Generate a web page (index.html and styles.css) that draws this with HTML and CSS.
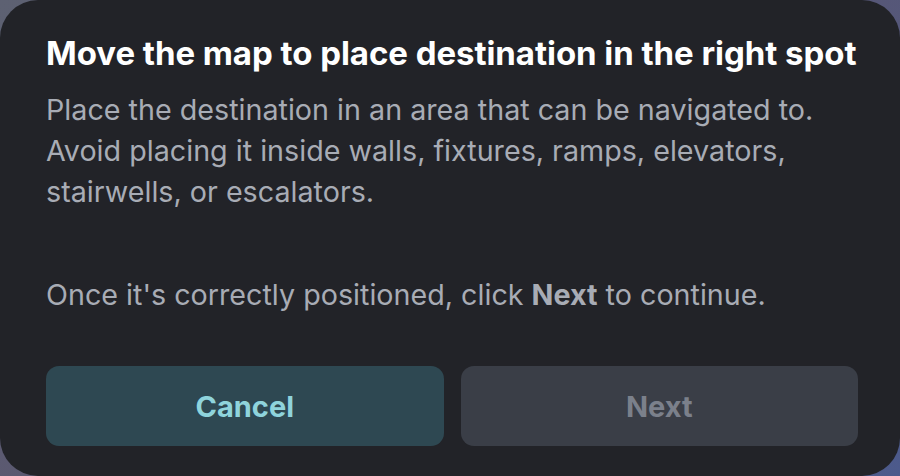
FILE: index.html
```html
<!DOCTYPE html>
<html>
<head>
<meta charset="utf-8">
<link rel="stylesheet" href="styles.css">
</head>
<body>
<div class="dialog">
  <h1 class="title">Move the map to place destination in the right spot</h1>
  <p class="text">Place the destination in an area that can be navigated to.<br>Avoid placing it inside walls, fixtures, ramps, elevators,<br>stairwells, or escalators.</p>
  <p class="text second">Once it's correctly positioned, click <b>Next</b> to continue.</p>
  <div class="actions">
    <button class="btn cancel">Cancel</button>
    <button class="btn next">Next</button>
  </div>
</div>
</body>
</html>
```
FILE: styles.css
```css
html, body {
  margin: 0;
  padding: 0;
  width: 900px;
  height: 476px;
  overflow: hidden;
}
body {
  background: linear-gradient(135deg, #5d6172 0%, #5a5670 50%, #4c5a8c 100%);
  font-family: Inter, "Noto Sans", sans-serif;
}
.dialog {
  box-sizing: border-box;
  width: 900px;
  height: 476px;
  background: #222328;
  border-radius: 38px;
  padding: 33px 42px 0 46px;
  display: flex;
  flex-direction: column;
}
.title {
  margin: 0;
  color: #ffffff;
  font-size: 33px;
  font-weight: 700;
  line-height: 40px;
  letter-spacing: -0.05px;
  white-space: nowrap;
}
.text {
  margin: 16px 0 0 0;
  color: #a8acb5;
  font-size: 28.7px;
  font-weight: 400;
  line-height: 41px;
  white-space: nowrap;
}
.text b {
  font-weight: 700;
}
.second {
  margin-top: 62px;
}
.actions {
  margin-top: 51px;
  display: flex;
  gap: 17px;
}
.btn {
  flex: 1;
  height: 80px;
  border: none;
  border-radius: 13px;
  font-family: inherit;
  font-size: 29px;
  font-weight: 700;
  padding: 0;
}
.cancel {
  background: #2e4852;
  color: #8fd4dc;
}
.next {
  background: #3a3e47;
  color: #7b808b;
}
```
